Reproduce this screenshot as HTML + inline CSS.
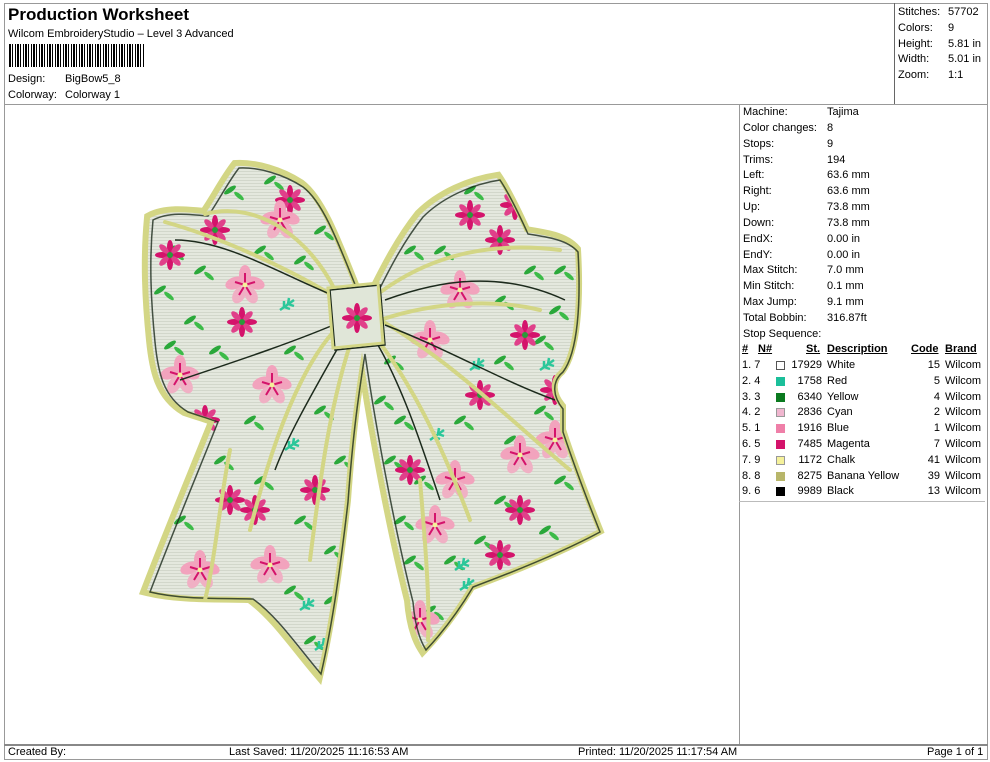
<!DOCTYPE html>
<html><head><meta charset="utf-8"><style>
body{margin:0;width:990px;height:762px;background:#fff;position:relative;font-family:"Liberation Sans",Arial,sans-serif;font-size:11px;color:#000;overflow:hidden}
.a{position:absolute;white-space:nowrap}
.l{position:absolute;background:#999}
</style></head><body>
<div class="l" style="left:4px;top:3px;width:984px;height:1px"></div>
<div class="l" style="left:4px;top:3px;width:1px;height:756px"></div>
<div class="l" style="left:987px;top:3px;width:1px;height:756px"></div>
<div class="l" style="left:4px;top:104px;width:984px;height:1px"></div>
<div class="l" style="left:894px;top:3px;width:1px;height:101px;background:#666"></div>
<div class="l" style="left:739px;top:104px;width:1px;height:640px"></div>
<div class="l" style="left:739px;top:501px;width:246px;height:1px;background:#bbb"></div>
<div class="l" style="left:4px;top:744px;width:984px;height:2px;background:#888"></div>
<div class="l" style="left:4px;top:759px;width:984px;height:1px"></div>

<div class="a" style="left:8px;top:5px;font-size:17px;font-weight:bold">Production Worksheet</div>
<div class="a" style="left:8px;top:28px">Wilcom EmbroideryStudio – Level 3 Advanced</div>
<div class="a" style="left:9px;top:44px;width:136px;height:23px;background:repeating-linear-gradient(90deg,#000 0 2px,#fff 2px 3px,#000 3px 4px,#fff 4px 6px,#000 6px 7px,#fff 7px 8px)"></div>
<div class="a" style="left:8px;top:73px">Design:</div><div class="a" style="left:65px;top:73px">BigBow5_8</div>
<div class="a" style="left:8px;top:89px">Colorway:</div><div class="a" style="left:65px;top:89px">Colorway 1</div>

<div class="a" style="left:898px;top:5px;line-height:15.8px">Stitches:<br>Colors:<br>Height:<br>Width:<br>Zoom:</div>
<div class="a" style="left:948px;top:5px;line-height:15.8px">57702<br>9<br>5.81 in<br>5.01 in<br>1:1</div>

<div class="a" style="left:743px;top:105px;line-height:15.85px">Machine:<br>Color changes:<br>Stops:<br>Trims:<br>Left:<br>Right:<br>Up:<br>Down:<br>EndX:<br>EndY:<br>Max Stitch:<br>Min Stitch:<br>Max Jump:<br>Total Bobbin:<br>Stop Sequence:</div>
<div class="a" style="left:827px;top:105px;line-height:15.85px">Tajima<br>8<br>9<br>194<br>63.6 mm<br>63.6 mm<br>73.8 mm<br>73.8 mm<br>0.00 in<br>0.00 in<br>7.0 mm<br>0.1 mm<br>9.1 mm<br>316.87ft</div>

<div class="a" style="left:742px;top:343px;font-weight:bold;text-decoration:underline">#</div>
<div class="a" style="left:758px;top:343px;font-weight:bold;text-decoration:underline">N#</div>
<div class="a" style="left:806px;top:343px;font-weight:bold;text-decoration:underline">St.</div>
<div class="a" style="left:827px;top:343px;font-weight:bold;text-decoration:underline">Description</div>
<div class="a" style="left:911px;top:343px;font-weight:bold;text-decoration:underline">Code</div>
<div class="a" style="left:945px;top:343px;font-weight:bold;text-decoration:underline">Brand</div>
<div class="a" style="left:742px;top:358px;line-height:15.8px">1. 7<br>2. 4<br>3. 3<br>4. 2<br>5. 1<br>6. 5<br>7. 9<br>8. 8<br>9. 6</div>
<div class="a" style="left:776px;top:358px;width:10px">
<div style="height:9px;width:9px;margin-top:3px;box-sizing:border-box;border:1px solid #555;background:#fff"></div>
<div style="height:9px;width:9px;margin-top:6.8px;background:#1bbf9a"></div>
<div style="height:9px;width:9px;margin-top:6.8px;background:#0b7a1f"></div>
<div style="height:9px;width:9px;margin-top:6.8px;background:#f0b6cf;border:1px solid #999;box-sizing:border-box"></div>
<div style="height:9px;width:9px;margin-top:6.8px;background:#ef7fa8"></div>
<div style="height:9px;width:9px;margin-top:6.8px;background:#d4136b"></div>
<div style="height:9px;width:9px;margin-top:6.8px;background:#f5f19a;border:1px solid #999;box-sizing:border-box"></div>
<div style="height:9px;width:9px;margin-top:6.8px;background:#b8b66a"></div>
<div style="height:9px;width:9px;margin-top:6.8px;background:#000"></div>
</div>
<div class="a" style="left:786px;top:358px;width:36px;text-align:right;line-height:15.8px">17929<br>1758<br>6340<br>2836<br>1916<br>7485<br>1172<br>8275<br>9989</div>
<div class="a" style="left:827px;top:358px;line-height:15.8px">White<br>Red<br>Yellow<br>Cyan<br>Blue<br>Magenta<br>Chalk<br>Banana Yellow<br>Black</div>
<div class="a" style="left:900px;top:358px;width:40px;text-align:right;line-height:15.8px">15<br>5<br>4<br>2<br>1<br>7<br>41<br>39<br>13</div>
<div class="a" style="left:945px;top:358px;line-height:15.8px">Wilcom<br>Wilcom<br>Wilcom<br>Wilcom<br>Wilcom<br>Wilcom<br>Wilcom<br>Wilcom<br>Wilcom</div>

<svg class="a" style="left:0;top:0" width="740" height="744">
<defs>
<path id="bow" d="M355,290 C335,240 320,200 300,185 C280,172 255,165 236,166 C225,180 215,200 205,214 C185,212 165,210 150,218 C146,260 148,300 152,340 C155,370 160,395 185,410 C200,415 210,418 215,420 C195,470 170,530 147,590 C180,598 220,596 250,597 C275,615 295,645 318,672 C330,620 338,560 345,500 C350,430 356,390 362,352 C372,420 390,520 410,600 C412,625 418,640 423,648 C440,630 455,610 470,585 C510,570 560,550 597,530 C585,500 570,460 560,430 L560,407 C550,395 548,380 560,370 C575,350 578,300 575,250 C565,238 545,235 525,232 C515,210 505,190 497,178 C470,182 440,195 420,215 C400,240 385,270 375,290 Z"/>
<clipPath id="cp"><use href="#bow"/></clipPath>
<g id="fm"><ellipse cx="0" cy="-8" rx="3" ry="7" fill="#d4136b"/><ellipse cx="0" cy="8" rx="3" ry="7" fill="#d4136b"/><ellipse cx="-8" cy="0" rx="7" ry="3" fill="#d4136b"/><ellipse cx="8" cy="0" rx="7" ry="3" fill="#d4136b"/><ellipse cx="6" cy="6" rx="3" ry="6" transform="rotate(-45 6 6)" fill="#e0408a"/><ellipse cx="-6" cy="6" rx="3" ry="6" transform="rotate(45 -6 6)" fill="#e0408a"/><ellipse cx="6" cy="-6" rx="3" ry="6" transform="rotate(45 6 -6)" fill="#e0408a"/><ellipse cx="-6" cy="-6" rx="3" ry="6" transform="rotate(-45 -6 -6)" fill="#e0408a"/><circle r="3" fill="#2a9a3a"/></g>
<g id="fp"><ellipse cx="0" cy="-10" rx="6" ry="10" fill="#f2a3bd"/><ellipse cx="10" cy="-2" rx="10" ry="6" transform="rotate(20 10 -2)" fill="#f2a3bd"/><ellipse cx="-10" cy="-2" rx="10" ry="6" transform="rotate(-20 -10 -2)" fill="#f2a3bd"/><ellipse cx="6" cy="10" rx="6" ry="9" transform="rotate(-30 6 10)" fill="#f0b0c4"/><ellipse cx="-6" cy="10" rx="6" ry="9" transform="rotate(30 -6 10)" fill="#f0b0c4"/><path d="M0,0 L0,-12 M0,0 L10,-3 M0,0 L-10,-3 M0,0 L6,10 M0,0 L-6,10" stroke="#d4136b" stroke-width="2"/><circle r="2.5" fill="#f5f19a"/></g>
<g id="lf"><ellipse cx="0" cy="0" rx="7" ry="2.5" fill="#2aa83a" transform="rotate(-35)"/><ellipse cx="9" cy="6" rx="6" ry="2.2" fill="#3cbb48" transform="rotate(40 9 6)"/></g>
<g id="lt"><path d="M0,0 L14,-10 M4,-3 L4,-9 M8,-6 L9,-12 M4,-3 L10,-1 M8,-6 L14,-4" stroke="#2cc79a" stroke-width="2.5"/></g>
<pattern id="hatch" width="6" height="3" patternUnits="userSpaceOnUse"><rect width="6" height="3" fill="#e4e8de"/><rect width="6" height="1" fill="#d2d7cb"/></pattern>
</defs>
<use href="#bow" fill="none" stroke="#d3d685" stroke-width="12"/>
<use href="#bow" fill="url(#hatch)"/>
<g clip-path="url(#cp)">
<g>
<use href="#lf" x="170" y="250"/><use href="#lf" x="190" y="320"/><use href="#lf" x="165" y="420"/><use href="#lf" x="260" y="250"/><use href="#lf" x="300" y="260"/><use href="#lf" x="320" y="410"/><use href="#lf" x="390" y="360"/><use href="#lf" x="400" y="420"/><use href="#lf" x="420" y="480"/><use href="#lf" x="500" y="300"/><use href="#lf" x="530" y="270"/><use href="#lf" x="555" y="310"/><use href="#lf" x="480" y="540"/><use href="#lf" x="250" y="610"/><use href="#lf" x="180" y="520"/><use href="#lf" x="330" y="550"/><use href="#lf" x="410" y="560"/><use href="#lf" x="220" y="460"/><use href="#lf" x="440" y="250"/><use href="#lf" x="560" y="480"/><use href="#lf" x="310" y="640"/><use href="#lf" x="380" y="400"/>
<use href="#lf" x="160" y="290"/><use href="#lf" x="200" y="270"/><use href="#lf" x="230" y="190"/><use href="#lf" x="270" y="180"/><use href="#lf" x="320" y="230"/><use href="#lf" x="290" y="350"/><use href="#lf" x="215" y="350"/><use href="#lf" x="170" y="345"/><use href="#lf" x="250" y="420"/><use href="#lf" x="300" y="520"/><use href="#lf" x="260" y="480"/><use href="#lf" x="200" y="560"/><use href="#lf" x="290" y="590"/><use href="#lf" x="330" y="600"/><use href="#lf" x="340" y="460"/><use href="#lf" x="410" y="250"/><use href="#lf" x="470" y="190"/><use href="#lf" x="540" y="340"/><use href="#lf" x="500" y="360"/><use href="#lf" x="460" y="420"/><use href="#lf" x="510" y="440"/><use href="#lf" x="540" y="410"/><use href="#lf" x="450" y="560"/><use href="#lf" x="430" y="610"/><use href="#lf" x="500" y="500"/><use href="#lf" x="545" y="530"/><use href="#lf" x="400" y="520"/><use href="#lf" x="390" y="460"/><use href="#lf" x="560" y="270"/>
</g>
<use href="#fm" x="215" y="230"/><use href="#fm" x="242" y="322"/><use href="#fm" x="290" y="200"/><use href="#fm" x="480" y="395"/><use href="#fm" x="520" y="510"/><use href="#fm" x="230" y="500"/><use href="#fm" x="315" y="490"/><use href="#fm" x="350" y="330"/><use href="#fm" x="470" y="215"/><use href="#fm" x="500" y="240"/><use href="#fm" x="525" y="335"/><use href="#fm" x="205" y="420"/><use href="#fm" x="255" y="510"/><use href="#fm" x="500" y="555"/><use href="#fm" x="410" y="470"/><use href="#fm" x="170" y="255"/><use href="#fm" x="515" y="205"/><use href="#fm" x="555" y="390"/>
<use href="#fp" x="180" y="375"/><use href="#fp" x="270" y="565"/><use href="#fp" x="460" y="290"/><use href="#fp" x="455" y="480"/><use href="#fp" x="272" y="385"/><use href="#fp" x="435" y="525"/><use href="#fp" x="520" y="455"/><use href="#fp" x="245" y="285"/><use href="#fp" x="430" y="340"/><use href="#fp" x="200" y="570"/><use href="#fp" x="280" y="220"/><use href="#fp" x="555" y="440"/><use href="#fp" x="420" y="620"/>
<use href="#lt" x="280" y="310"/><use href="#lt" x="470" y="370"/><use href="#lt" x="285" y="450"/><use href="#lt" x="460" y="590"/><use href="#lt" x="300" y="610"/><use href="#lt" x="430" y="440"/><use href="#lt" x="540" y="370"/><use href="#lt" x="315" y="650"/><use href="#lt" x="455" y="570"/>
</g>
<use href="#bow" fill="none" stroke="#1c2a1c" stroke-width="1.5" transform="translate(3,2)" opacity=".8"/>
<g fill="none" stroke="#d3d685" stroke-width="4" stroke-linecap="round">
<path d="M165,222 C230,240 300,275 340,300"/><path d="M205,214 C260,200 310,240 335,290"/>
<path d="M370,300 C420,260 480,240 560,250"/><path d="M380,320 C440,300 500,300 540,310"/>
<path d="M345,320 C300,360 270,450 250,530"/><path d="M355,330 C330,400 320,480 310,560"/>
<path d="M370,330 C410,380 440,440 470,520"/><path d="M380,320 C450,360 510,420 570,470"/>
<path d="M230,450 C220,500 215,560 205,600"/><path d="M420,480 C425,540 430,600 428,640"/>
</g>
<g fill="none" stroke="#1c2a1c" stroke-width="1.5">
<path d="M175,240 C230,240 290,280 345,300"/><path d="M180,380 C240,360 300,340 345,320"/>
<path d="M385,300 C440,280 500,270 565,300"/><path d="M385,325 C450,350 500,380 555,400"/>
<path d="M348,330 C320,380 290,430 275,470"/><path d="M372,335 C400,380 420,440 440,500"/>
</g>
<path d="M330,290 L380,285 L385,345 L335,350 Z" fill="#e0e6d8" stroke="#1c2a1c" stroke-width="1.5"/>
<use href="#fm" x="357" y="318"/>
<path d="M330,290 L380,285 L385,345 L335,350 Z" fill="none" stroke="#d3d685" stroke-width="3" transform="translate(-2,-2)"/>
</svg>

<div class="a" style="left:8px;top:746px">Created By:</div>
<div class="a" style="left:229px;top:746px">Last Saved: 11/20/2025 11:16:53 AM</div>
<div class="a" style="left:578px;top:746px">Printed: 11/20/2025 11:17:54 AM</div>
<div class="a" style="left:927px;top:746px">Page 1 of 1</div>
</body></html>
